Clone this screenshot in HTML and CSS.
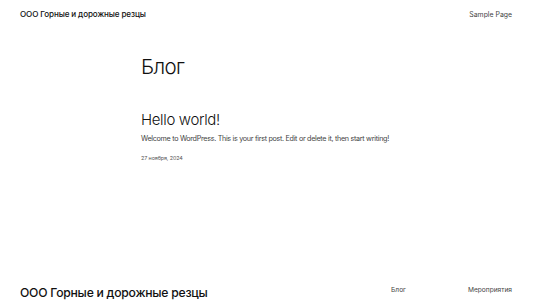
FILE: index.html
```html
<!DOCTYPE html>
<html lang="ru">
<head>
<meta charset="utf-8">
<title>Блог – ООО Горные и дорожные резцы</title>
<link rel="stylesheet" href="styles.css">
</head>
<body>
<header class="site-header">
  <a class="site-title" href="#">ООО Горные и дорожные резцы</a>
  <nav class="header-nav"><a href="#">Sample Page</a></nav>
</header>
<main class="content">
  <h1 class="page-title">Блог</h1>
  <article class="post">
    <h2 class="post-title">Hello world!</h2>
    <p class="post-excerpt">Welcome to WordPress. This is your first post. Edit or delete it, then start writing!</p>
    <div class="post-date">27 ноября, 2024</div>
  </article>
</main>
<footer class="site-footer">
  <a class="footer-title" href="#">ООО Горные и дорожные резцы</a>
  <nav class="footer-nav">
    <a href="#">Блог</a>
    <a href="#">Мероприятия</a>
  </nav>
</footer>
</body>
</html>
```
FILE: styles.css
```css
html, body {
  margin: 0;
  padding: 0;
  background: #fff;
  color: #111;
  font-family: Inter, "Noto Sans", sans-serif;
  overflow: hidden;
  height: 300px;
}
a { color: inherit; text-decoration: none; }

.site-header {
  display: flex;
  justify-content: space-between;
  align-items: center;
  height: 28px;
  padding: 0 20px;
}
.site-title {
  font-size: 8.1px;
  font-weight: 500;
  letter-spacing: -0.12px;
}
.header-nav {
  font-size: 6.9px;
  color: #444;
  padding-right: 1px;
}

.content {
  width: 251px;
  margin: 0 auto;
  padding-top: 26px;
  height: 256px;
  box-sizing: border-box;
}
.page-title {
  margin: 0;
  font-size: 20.5px;
  font-weight: 300;
  line-height: 26px;
  letter-spacing: -0.6px;
}
.post {
  margin-top: 30px;
}
.post-title {
  margin: 0;
  font-size: 15px;
  font-weight: 300;
  line-height: 20px;
  letter-spacing: -0.35px;
}
.post-excerpt {
  margin: 3px 0 0;
  font-size: 7.2px;
  line-height: 11px;
  color: #444;
  letter-spacing: -0.3px;
  white-space: nowrap;
}
.post-date {
  margin-top: 11px;
  font-size: 5.4px;
  color: #555;
  letter-spacing: -0.1px;
}

.site-footer {
  display: flex;
  justify-content: space-between;
  align-items: flex-start;
  padding: 0 20px;
}
.footer-title {
  font-size: 12.2px;
  font-weight: 500;
  letter-spacing: -0.25px;
  line-height: 18px;
}
.footer-nav {
  display: flex;
  gap: 62px;
  font-size: 6.6px;
  color: #444;
  padding-top: 2px;
  padding-right: 1px;
}
```
